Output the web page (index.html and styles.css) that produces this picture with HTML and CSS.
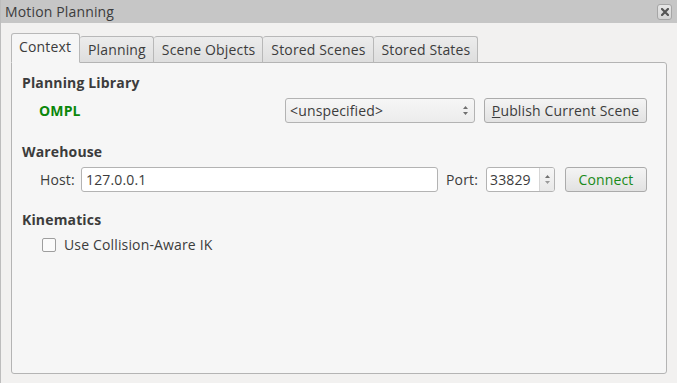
FILE: index.html
```html
<!DOCTYPE html>
<html>
<head>
<meta charset="utf-8">
<link rel="stylesheet" href="styles.css">
</head>
<body>
<div class="window">
  <div class="titlebar">
    <span class="title">Motion Planning</span>
    <span class="close">
      <svg width="8" height="8" viewBox="0 0 8 8"><path d="M1 1 L7 7 M7 1 L1 7" stroke="#555555" stroke-width="2.2" stroke-linecap="square"/></svg>
    </span>
  </div>
  <div class="body">
    <div class="tabs">
      <div class="tab active">Context</div>
      <div class="tab">Planning</div>
      <div class="tab">Scene Objects</div>
      <div class="tab">Stored Scenes</div>
      <div class="tab">Stored States</div>
    </div>
    <div class="panel">
      <div class="heading h1">Planning Library</div>
      <div class="row row1">
        <div class="ompl">OMPL</div>
        <div class="combo">
          <span>&lt;unspecified&gt;</span>
          <svg class="updown" width="7" height="11" viewBox="0 0 7 11"><path d="M3.5 1 L6 4 L1 4 Z M3.5 10 L6 7 L1 7 Z" fill="#707070"/></svg>
        </div>
        <div class="button publish"><span class="ul">P</span>ublish Current Scene</div>
      </div>
      <div class="heading h2">Warehouse</div>
      <div class="row row2">
        <div class="label host">Host:</div>
        <div class="input host-input">127.0.0.1</div>
        <div class="label port">Port:</div>
        <div class="spin">
          <span class="spin-val">33829</span>
          <span class="spin-btns">
            <svg width="7" height="11" viewBox="0 0 7 11"><path d="M3.5 1 L6 4 L1 4 Z" fill="#707070"/><path d="M3.5 10 L6 7 L1 7 Z" fill="#9a9a9a"/></svg>
          </span>
        </div>
        <div class="button connect">Connect</div>
      </div>
      <div class="heading h3">Kinematics</div>
      <div class="row row3">
        <span class="checkbox"></span>
        <span class="check-label">Use Collision-Aware IK</span>
      </div>
    </div>
  </div>
</div>
</body>
</html>
```
FILE: styles.css
```css
* { box-sizing: border-box; }
html, body { margin: 0; padding: 0; }
body {
  width: 677px;
  height: 383px;
  overflow: hidden;
  font-family: "Open Sans", "Noto Sans", "DejaVu Sans", sans-serif;
  font-size: 14px;
  letter-spacing: 0.15px;
  color: #3c3c3c;
  background: #f2f1f0;
}
.window {
  width: 677px;
  height: 383px;
  display: flex;
  flex-direction: column;
  border-left: 1px solid #bdbdbd;
}
.titlebar {
  height: 23px;
  background: #c6c6c6;
  display: flex;
  align-items: center;
  justify-content: space-between;
  padding: 0 5px 0 4px;
}
.title { color: #3c3c3c; font-size: 14px; }
.close {
  width: 15px;
  height: 16px;
  border: 1px solid #a6a6a6;
  border-radius: 3px;
  background: linear-gradient(#e6e6e6, #d4d4d4);
  display: flex;
  align-items: center;
  justify-content: center;
}
.body {
  flex: 1;
  display: flex;
  flex-direction: column;
  padding: 10px 10px 9px 10px;
}
.tabs {
  display: flex;
  align-items: flex-end;
  height: 30px;
  margin-bottom: -1px;
  position: relative;
  z-index: 1;
}
.tab {
  height: 27px;
  padding: 0 7px 1px 8px;
  display: flex;
  align-items: center;
  border: 1px solid #b8b8b8;
  border-left: none;
  border-bottom: 1px solid #b4b4b4;
  background: linear-gradient(#ececec, #dedede);
  border-radius: 3px 3px 0 0;
}
.tab.active {
  height: 30px;
  border-left: 1px solid #b8b8b8;
  border-bottom: 1px solid #f6f6f6;
  background: #f6f6f6;
  padding: 0 7px 3px 7px;
  width: 69px;
}
.panel {
  flex: 1;
  border: 1px solid #b4b4b4;
  border-radius: 0 3px 3px 3px;
  background: #f6f6f6;
  padding: 12px 19px 0 10px;
  display: flex;
  flex-direction: column;
}
.heading { font-weight: 700; line-height: 16px; height: 16px; }
.h2 { margin-top: 21px; }
.h3 { margin-top: 20px; }
.row { display: flex; align-items: center; }
.row1 { margin-top: 7px; height: 25px; }
.row2 { margin-top: 7px; height: 25px; }
.row3 { margin-top: 8px; height: 17px; }
.ompl {
  flex: 1;
  padding-left: 17px;
  color: #0b870b;
  font-weight: 700;
}
.combo {
  width: 190px;
  height: 25px;
  border: 1px solid #b3b3b3;
  border-radius: 3px;
  background: linear-gradient(#f6f6f6, #ececec);
  display: flex;
  align-items: center;
  justify-content: space-between;
  padding: 0 5px 0 4px;
}
.button {
  height: 25px;
  border: 1px solid #ababab;
  border-radius: 3px;
  background: linear-gradient(#f4f4f4, #e2e2e2);
  display: flex;
  align-items: center;
  justify-content: center;
}
.publish { width: 163px; margin-left: 9px; }
.ul { text-decoration: underline; }
.label.host { margin-left: 18px; width: 41px; }
.input {
  flex: 1;
  height: 25px;
  border: 1px solid #b3b3b3;
  border-radius: 3px;
  background: #ffffff;
  display: flex;
  align-items: center;
  padding-left: 4px;
}
.label.port { margin-left: 8px; width: 40px; }
.spin {
  width: 69px;
  height: 25px;
  border: 1px solid #b3b3b3;
  border-radius: 3px;
  background: #ffffff;
  display: flex;
  align-items: stretch;
}
.spin-val { flex: 1; display: flex; align-items: center; padding-left: 3px; }
.spin-btns {
  width: 15px;
  border-left: 1px solid #d6d6d6;
  background: linear-gradient(#f6f6f6, #e8e8e8);
  border-radius: 0 2px 2px 0;
  display: flex;
  align-items: center;
  justify-content: center;
}
.connect { width: 82px; margin-left: 10px; color: #198a19; }
.checkbox {
  margin-left: 20px;
  width: 14px;
  height: 14px;
  border: 1px solid #9e9e9e;
  border-radius: 2px;
  background: #fbfbfb;
}
.check-label { margin-left: 8px; }
```
